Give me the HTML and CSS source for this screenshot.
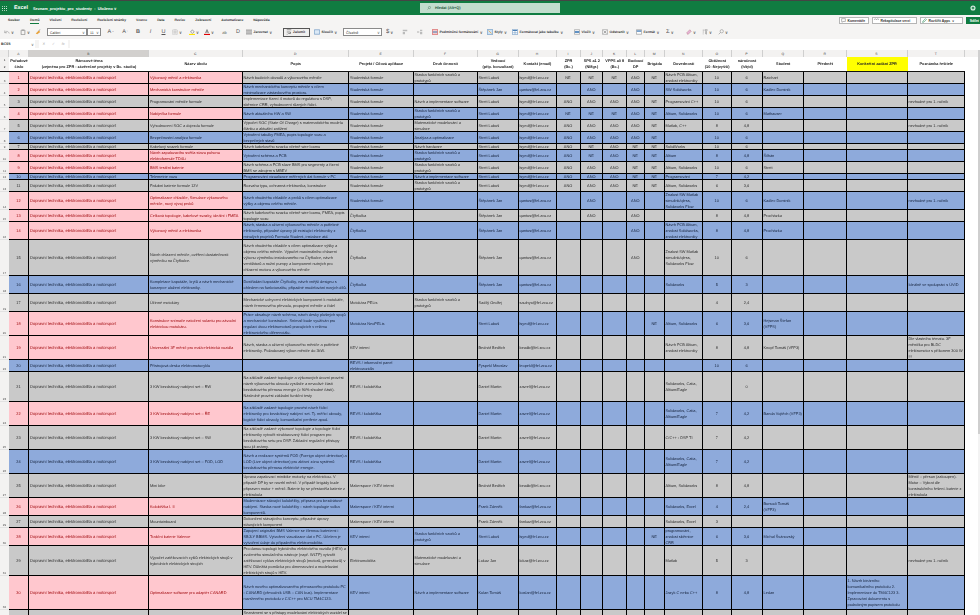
FILE: index.html
```html
<!DOCTYPE html>
<html lang="cs">
<head>
<meta charset="utf-8">
<title>Seznam_projektu_pro_studenty</title>
<link rel="stylesheet" href="styles.css">
</head>
<body>
<div class="app">
<header class="titlebar">
  <svg class="waffle" viewBox="0 0 6 6"><path d="M0 0h1v1H0zM2.500 0h1v1h-1zM5 0h1v1H5zM0 2.500h1v1H0zM2.500 2.500h1v1h-1zM5 2.500h1v1H5zM0 5h1v1H0zM2.500 5h1v1h-1zM5 5h1v1H5z" fill="#fff"/></svg>
  <span class="brand">Excel</span>
  <span class="doc">Seznam_projektu_pro_studenty &nbsp;-&nbsp; Uloženo ∨</span>
  <div class="search"><svg class="sicon" viewBox="0 0 8 8"><circle cx="5" cy="3" r="2.200" fill="none" stroke="#3a6b50" stroke-width="0.800"/><path d="M3.400 4.600 1 7" stroke="#3a6b50" stroke-width="0.800"/></svg><span>Hledat (Alt+Q)</span></div>
  <svg class="gear" viewBox="0 0 8 8"><circle cx="4" cy="4" r="2.600" fill="none" stroke="#d8ebe0" stroke-width="1.600"/><circle cx="4" cy="4" r="0.800" fill="#d8ebe0"/></svg>
</header>
<nav class="tabs">
  <span>Soubor</span><span class="on">Domů</span><span>Vložení</span><span>Rozložení</span><span>Rozložení stránky</span><span>Vzorce</span><span>Data</span><span>Revize</span><span>Zobrazení</span><span>Automatizace</span><span>Nápověda</span>
  <div class="actions">
    <button class="act a1"><svg viewBox="0 0 8 8"><path d="M1 1h6v4.500H3.500L2 7V5.500H1z" fill="none" stroke="#444" stroke-width="0.600"/></svg>Komentáře</button>
    <button class="act a2"><svg viewBox="0 0 8 8"><path d="M0 3 2 1 4 3 6 1 8 3" fill="none" stroke="#444" stroke-width="0.700"/></svg>Rekapitulace verzí</button>
    <button class="act a3"><svg viewBox="0 0 8 8"><path d="M1 7 1.500 5 5.500 1 7 2.500 3 6.500z" fill="none" stroke="#107c41" stroke-width="0.800"/></svg>Rozšířit Apps &nbsp;∨</button>
    <button class="share"><svg viewBox="0 0 8 8"><path d="M1 5v2h6V5M4 5V1M2.500 2.500 4 1l1.500 1.500" fill="none" stroke="#fff" stroke-width="0.800"/></svg>Sdílet</button>
  </div>
</nav>
<div class="toolbar">
  <div class="ti"><svg viewBox="0 0 8 8"><path d="M1 2v3h3M1 5c2-3 5-2 6 1" fill="none" stroke="#999" stroke-width="0.800"/></svg><em>∨</em></div>
  <div class="ti"><svg viewBox="0 0 8 8"><path d="M1.500 1.500h5v6h-5z" fill="none" stroke="#777" stroke-width="0.800"/><path d="M3 1h2v1H3z" fill="#777"/></svg><em>∨</em></div>
  <div class="ti"><svg viewBox="0 0 8 8"><path d="M1 6 5 2l2 2-4 3z" fill="#e8a33d"/><path d="M5 2 7 1" stroke="#666" stroke-width="0.800"/></svg></div>
  <div class="fontsel"><span class="sel fname">Calibri<em>∨</em></span><span class="sel fsize">11<em>∨</em></span></div>
  <div class="ti big">A<sup>^</sup></div>
  <div class="ti big">A<sup>ˇ</sup></div>
  <div class="ti big"><b>B</b></div>
  <div class="ti big"><i>I</i></div>
  <div class="ti big"><u>U</u></div>
  <div class="ti"><svg viewBox="0 0 8 8"><path d="M1 1h6v6H1zM4 1v6M1 4h6" fill="none" stroke="#888" stroke-width="0.600" stroke-dasharray="1 0.600"/></svg><em>∨</em></div>
  <div class="ti"><svg viewBox="0 0 8 8"><path d="M2 4 4.500 1 7 4 4.500 5.800z" fill="none" stroke="#666" stroke-width="0.700"/><path d="M0 6.500h8V8H0z" fill="#ffe500"/></svg><em>∨</em></div>
  <div class="ti"><svg viewBox="0 0 8 8"><path d="M2 5.500 4 .8 6 5.500M2.800 4h2.400" fill="none" stroke="#444" stroke-width="0.800"/><path d="M0 6.500h8V8H0z" fill="#e00000"/></svg><em>∨</em></div>
  <div class="ti small">ab</div>
  <div class="ti big">D</div>
  <div class="ti lab"><svg viewBox="0 0 8 8"><path d="M0 1.500h8M0 4h8M0 6.500h8" stroke="#555" stroke-width="0.900"/></svg><span>Zarovnat</span><em>∨</em></div>
  <div class="ti lab sel2"><svg viewBox="0 0 8 8"><path d="M1 1h6M1 4h5v2H3M1 7h1" fill="none" stroke="#555" stroke-width="0.800"/></svg><span>Zalomit</span></div>
  <div class="ti lab"><svg viewBox="0 0 8 8"><path d="M.5 1h7v6h-7z" fill="#dbe9f6" stroke="#4a7fb5" stroke-width="0.700"/></svg><span>Sloučit</span><em>∨</em></div>
  <span class="sel numfmt">Číselné<em>∨</em></span>
  <div class="ti"><span class="sym">$</span><em>∨</em></div>
  <div class="ti"><svg viewBox="0 0 8 8"><path d="M1 1h6v2H1zM1 4h3v3H1z" fill="#bbb"/></svg></div>
  <div class="ti"><svg viewBox="0 0 8 8"><path d="M4 1h3v2H4zM4 4h3v3H4z" fill="#bbb"/><path d="M0 4h3" stroke="#999"/></svg></div>
  <div class="ti lab"><svg viewBox="0 0 8 8"><path d="M.5.500h7v7h-7z" fill="#f4cccc" stroke="#c33" stroke-width="0.700"/><path d="M1 4h6" stroke="#4a7fb5" stroke-width="1.400"/></svg><span>Podmíněné formátování</span><em>∨</em></div>
  <div class="ti lab"><svg viewBox="0 0 8 8"><path d="M.5.500h7v7h-7z" fill="#cfe2f3" stroke="#4a7fb5" stroke-width="0.700"/><path d="M2 2 6 6" stroke="#e8a33d"/></svg><span>Styly</span><em>∨</em></div>
  <div class="ti lab"><svg viewBox="0 0 8 8"><path d="M.5.500h7v7h-7z" fill="#fff" stroke="#4a7fb5" stroke-width="0.700"/><path d="M1 2h6" stroke="#4a7fb5" stroke-width="1.400"/><path d="M4 1v6M1 5h6" stroke="#4a7fb5" stroke-width="0.600"/></svg><span>Formátovat jako tabulku</span><em>∨</em></div>
  <div class="ti lab"><svg viewBox="0 0 8 8"><path d="M.5 1h7v6h-7z" fill="#fff" stroke="#666" stroke-width="0.600"/><path d="M1 3h6v2H1z" fill="#2b6cb0"/></svg><span>Vložit</span><em>∨</em></div>
  <div class="ti lab"><svg viewBox="0 0 8 8"><path d="M.5 1h7v6h-7z" fill="#fff" stroke="#666" stroke-width="0.600"/><path d="M2 2.500 6 5.500M6 2.500 2 5.500" stroke="#555" stroke-width="0.700"/></svg><span>Odstranit</span><em>∨</em></div>
  <div class="ti lab"><svg viewBox="0 0 8 8"><path d="M.5 1h7v6h-7z" fill="#fff" stroke="#666" stroke-width="0.600"/><path d="M1 2h6v1.500H1z" fill="#2b6cb0"/></svg><span>Formát</span><em>∨</em></div>
  <div class="ti"><span class="sym">Σ</span><em>∨</em></div>
  <div class="ti"><svg viewBox="0 0 8 8"><path d="M1 5 5 1l2 2-4 4H2z" fill="#e6b3d8" stroke="#a66" stroke-width="0.500"/></svg><em>∨</em></div>
  <div class="ti"><svg viewBox="0 0 8 8"><path d="M1 1.500h2M1 4h1.500M1 6.500h1M4 1h3L5.800 3.500V7L5 6.500V3.500z" fill="none" stroke="#777" stroke-width="0.700"/></svg><em>∨</em></div>
  <div class="ti"><svg viewBox="0 0 8 8"><circle cx="5" cy="3" r="2.200" fill="none" stroke="#888" stroke-width="0.700"/><path d="M3.400 4.600 1 7" stroke="#888" stroke-width="0.800"/></svg><em>∨</em></div>
</div>
<div class="formula">
  <div class="namebox"><b>BC65</b><em>∨</em></div>
  <div class="fxbtns"><span>✕</span><span>✓</span><span><i>fx</i></span></div>
  <div class="fxinput"></div>
</div>
<main class="workspace">
<div class="sheet">
  <div class="colhead"><div class="corner"></div><div>A</div><div class="picked">B</div><div>C</div><div>D</div><div>E</div><div>F</div><div>G</div><div>H</div><div>I</div><div>J</div><div>K</div><div>L</div><div>M</div><div>N</div><div>O</div><div>P</div><div>Q</div><div>R</div><div>S</div><div>T</div></div>
  <div class="thead"><div class="rh2"><span>1</span><span>2</span></div><div>Pořadové číslo</div><div>Rámcové téma<br>(zejména pro ZPR - závěrečné projekty v Bc. studiu)</div><div>Název úkolu</div><div>Popis</div><div>Projekt / Cílová aplikace</div><div>Druh činnosti</div><div>Vedoucí<br>(příp. konzultant)</div><div>Kontakt (email)</div><div>ZPR<br>(Bc.)</div><div>SPS a1 2<br>(NMgr.)</div><div>VPPS a0 8<br>(Bc.)</div><div>Budoucí<br>DP</div><div>Brigáda</div><div>Dovednosti</div><div>Obtížnost<br>(10 -Nejvyšší)</div><div>náročnost<br>(h/týd)</div><div>Student</div><div>Předmět</div><div class="yellow">Konkrétní zadání ZPR</div><div>Poznámka řešitele</div></div>

  <div class="row h12 g pk"><div>3</div><div>1</div><div>Dopravní technika, elektromobilita a motorsport</div><div>Výkonový měnič a elektronika</div><div>Návrh budicích obvodů a výkonového měniče</div><div>Studentská formule</div><div>Stavba funkčních vzorků a prototypů</div><div>Streit Luboš</div><div>lsyed@fel.zcu.cz</div><div>NE</div><div>NE</div><div>NE</div><div>ANO</div><div>NE</div><div>Návrh PCB Altium, znalost elektroniky</div><div>10</div><div>6</div><div>Raichart</div><div></div><div></div><div></div></div>
  <div class="row h12 b pk"><div>4</div><div>2</div><div>Dopravní technika, elektromobilita a motorsport</div><div>Mechanická konstrukce měniče</div><div>Návrh mechanického konceptu měniče s cílem minimalizace zástavbového prostoru.</div><div>Studentská formule</div><div></div><div>Štěpánek Jan</div><div>qantos@fel.zcu.cz</div><div></div><div>ANO</div><div></div><div>ANO</div><div></div><div>SW Solidworks</div><div>10</div><div>6</div><div>Kadlec Dominik</div><div></div><div></div><div></div></div>
  <div class="row h12 g"><div>5</div><div>3</div><div>Dopravní technika, elektromobilita a motorsport</div><div>Programování měniče formule</div><div>Implementace řízení 4 motorů do regulátoru s DSP, sběrnice CRR, vyhodnocení různých řídicí.</div><div>Studentská formule</div><div>Návrh a implementace software</div><div>Streit Luboš</div><div>lsyed@fel.zcu.cz</div><div>ANO</div><div>ANO</div><div>ANO</div><div>ANO</div><div>NE</div><div>Programování C++</div><div>10</div><div>6</div><div></div><div></div><div></div><div>nevhodné pro 1. ročník</div></div>
  <div class="row h12 b pk"><div>6</div><div>4</div><div>Dopravní technika, elektromobilita a motorsport</div><div>Nabíječka formule</div><div>Návrh aktuálního HW a SW</div><div>Studentská formule</div><div>Stavba funkčních vzorků a prototypů</div><div>Streit Luboš</div><div>lsyed@fel.zcu.cz</div><div>NE</div><div>NE</div><div>NE</div><div>ANO</div><div>NE</div><div>Altium, Solidworks</div><div>10</div><div>6</div><div>Mathauser</div><div></div><div></div><div></div></div>
  <div class="row h12 g"><div>7</div><div>5</div><div>Dopravní technika, elektromobilita a motorsport</div><div>Vyhodnocení SOC a dojezdu formule</div><div>Výpočet SOC (State Of Charge) s matematického modelu článku a aktuální zatížení</div><div>Studentská formule</div><div>Matematické modelování a simulace</div><div>Streit Luboš</div><div>lsyed@fel.zcu.cz</div><div>ANO</div><div>ANO</div><div>ANO</div><div>ANO</div><div>NE</div><div>Matlab, C++</div><div>8</div><div>4,8</div><div></div><div></div><div></div><div>nevhodné pro 1. ročník</div></div>
  <div class="row h12 b"><div>8</div><div>6</div><div>Dopravní technika, elektromobilita a motorsport</div><div>Bezpečnostní analýza formule</div><div>Vytvoření tabulky FMEA, popis topologie vozu a bezpečných stavů</div><div>Studentská formule</div><div>Analýza a optimalizace</div><div>Streit Luboš</div><div>lsyed@fel.zcu.cz</div><div>ANO</div><div>ANO</div><div>ANO</div><div>ANO</div><div>NE</div><div></div><div>10</div><div>6</div><div></div><div></div><div></div><div></div></div>
  <div class="row h6 g"><div>9</div><div>7</div><div>Dopravní technika, elektromobilita a motorsport</div><div>Kabelový svazek formule</div><div>Návrh kabelového svazku včetně wire loomu</div><div>Studentská formule</div><div>Návrh hardware</div><div>Streit Luboš</div><div>lsyed@fel.zcu.cz</div><div>ANO</div><div>NE</div><div>ANO</div><div>NE</div><div>NE</div><div>SolidWorks</div><div>10</div><div>6</div><div></div><div></div><div></div><div></div></div>
  <div class="row h12 b pk"><div>10</div><div>8</div><div>Dopravní technika, elektromobilita a motorsport</div><div>Návrh zapalovacího světla stavu pohonu elektroformule TD4Li</div><div>Vytvoření schéma a PCB</div><div>Studentská formule</div><div>Stavba funkčních vzorků a prototypů</div><div>Streit Luboš</div><div>lsyed@fel.zcu.cz</div><div>ANO</div><div>NE</div><div>ANO</div><div>NE</div><div>NE</div><div>Altium</div><div>8</div><div>4,8</div><div>Šilhán</div><div></div><div></div><div></div></div>
  <div class="row h12 g pk"><div>11</div><div>9</div><div>Dopravní technika, elektromobilita a motorsport</div><div>BMS testční baterie</div><div>Návrh schéma a PCB slave BMS pro segmenty a řízení BMS se zdrojem s MBEV</div><div>Studentská formule</div><div>Stavba funkčních vzorků a prototypů</div><div>Streit Luboš</div><div>lsyed@fel.zcu.cz</div><div>ANO</div><div>ANO</div><div>ANO</div><div>NE</div><div>NE</div><div>Altium, Solidworks</div><div>10</div><div>6</div><div>Streit</div><div></div><div></div><div></div></div>
  <div class="row h6 b"><div>12</div><div>10</div><div>Dopravní technika, elektromobilita a motorsport</div><div>Telemetrie vozu</div><div>Programování vizualizace měřených dat formule v PC</div><div>Studentská formule</div><div>Návrh a implementace software</div><div>Streit Luboš</div><div>lsyed@fel.zcu.cz</div><div>ANO</div><div>ANO</div><div>ANO</div><div>NE</div><div>NE</div><div>Programování</div><div>7</div><div>4,2</div><div></div><div></div><div></div><div></div></div>
  <div class="row h12 g"><div>13</div><div>11</div><div>Dopravní technika, elektromobilita a motorsport</div><div>Palubní baterie formule 12V</div><div>Rozvaha typu, ochranná elektronika, konstrukce</div><div>Studentská formule</div><div>Stavba funkčních vzorků a prototypů</div><div>Streit Luboš</div><div>lsyed@fel.zcu.cz</div><div>ANO</div><div>ANO</div><div>ANO</div><div>NE</div><div>NE</div><div>Altium, Solidworks</div><div>6</div><div>3,6</div><div></div><div></div><div></div><div></div></div>
  <div class="row h18 b pk"><div>14</div><div>12</div><div>Dopravní technika, elektromobilita a motorsport</div><div>Optimalizace chladiče, Simulace výkonového měniče, nový vývoj prvků</div><div>Návrh vhodného chladiče a prvků s cílem optimalizace výšky a objemu celého měniče.</div><div>Studentská formule</div><div></div><div>Štěpánek Jan</div><div>qantos@fel.zcu.cz</div><div></div><div>ANO</div><div></div><div>ANO</div><div></div><div>Znalost SW Matlab simulink/qless, Solidworks Flow</div><div>10</div><div>6</div><div>Kadlec Dominik</div><div></div><div></div><div>nevhodné pro 1. ročník</div></div>
  <div class="row h12 g pk"><div>15</div><div>13</div><div>Dopravní technika, elektromobilita a motorsport</div><div>Celková topologie, kabelové svazky, ideální i FMEA</div><div>Návrh kabelového svazku včetně wire loomu, FMEA, popis topologie vozu</div><div>Čtyřkolka</div><div></div><div>Štěpánek Jan</div><div>qantos@fel.zcu.cz</div><div></div><div>ANO</div><div></div><div>ANO</div><div></div><div></div><div>8</div><div>4,8</div><div>Procházka</div><div></div><div></div><div></div></div>
  <div class="row h18 b pk"><div>16</div><div>14</div><div>Dopravní technika, elektromobilita a motorsport</div><div>Výkonový měnič a elektronika</div><div>Návrh, stavba a oživení výkonového měniče a potřebné elektroniky, případné úpravy již existující elektroniky z minulých projektů Formula Student, instalace atd.</div><div>Čtyřkolka</div><div></div><div>Štěpánek Jan</div><div>qantos@fel.zcu.cz</div><div></div><div></div><div></div><div>ANO</div><div></div><div>Návrh PCB Altium, znalost Solidworks, znalost elektroniky</div><div>8</div><div>4,8</div><div>Procházka</div><div></div><div></div><div></div></div>
  <div class="row h36 g"><div>17</div><div>15</div><div>Dopravní technika, elektromobilita a motorsport</div><div>Návrh chlazení měniče, ověření dostatečnosti výměníku na Čtyřkolce.</div><div>Návrh vhodného chladiče s cílem optimalizace výšky a objemu celého měniče. Výpočet maximálního chlazení výkonu výměníku instalovaného na Čtyřkolce, návrh ventilátorů a nožní pumpy a komponent nutných pro chlazení motoru a výkonového měniče</div><div>Čtyřkolka</div><div></div><div>Štěpánek Jan</div><div>qantos@fel.zcu.cz</div><div></div><div></div><div></div><div>ANO</div><div></div><div>Znalost SW Matlab simulink/qless, Solidworks Flow</div><div>10</div><div>6</div><div></div><div></div><div></div><div></div></div>
  <div class="row h18 b"><div>18</div><div>16</div><div>Dopravní technika, elektromobilita a motorsport</div><div>Kompletace kapotáže, krytů a návrh mechanické konzepce uložení elektroniky.</div><div>Dostřádání kapotáže Čtyřkolky, návrh vnější designu s ohledem na funkcionalitu, případné modelování nových dílů.</div><div>Čtyřkolka</div><div></div><div>Štěpánek Jan</div><div>qantos@fel.zcu.cz</div><div></div><div></div><div></div><div></div><div></div><div>Solidworks</div><div>5</div><div>3</div><div></div><div></div><div></div><div>Ideálně ve spolupráci s ÚVID</div></div>
  <div class="row h18 g"><div>19</div><div>17</div><div>Dopravní technika, elektromobilita a motorsport</div><div>Účinné motokáry</div><div>Mechanické uchycení elektrických komponent k motokáře, návrh řemenového převodu, propojení měniče a čidel</div><div>Motokára PELis</div><div>Stavba funkčních vzorků a prototypů</div><div>Sadílý Ondřej</div><div>saulnyo@fel.zcu.cz</div><div></div><div></div><div></div><div></div><div></div><div></div><div>4</div><div>2,4</div><div></div><div></div><div></div><div></div></div>
  <div class="row h24 b pk"><div>20</div><div>18</div><div>Dopravní technika, elektromobilita a motorsport</div><div>Konstrukce snímače natočení volantu pro závodní elektrickou motokáru.</div><div>Práce obsahuje návrh schéma, návrh desky plošných spojů a mechanické konstrukce. Snímač bude využíván pro regulaci dvou elektromotorů pracujících v režimu elektronického diferenciálu.</div><div>Motokára NeoPELis</div><div></div><div>Streit Luboš</div><div>lsyed@fel.zcu.cz</div><div></div><div></div><div></div><div></div><div>NE</div><div>Altium, Solidworks</div><div>6</div><div>3,6</div><div>Hejsman Štefan (VFPS)</div><div></div><div></div><div></div></div>
  <div class="row h24 g pk"><div>21</div><div>19</div><div>Dopravní technika, elektromobilita a motorsport</div><div>Univerzální 3F měnič pro malá elektrická vozidla</div><div>Návrh, stavba a oživení výkonového měniče a potřebné elektroniky. Požadovaný výkon měniče do 3kW.</div><div>KEV interní</div><div></div><div>Bednář Bedřich</div><div>beadb@fel.zcu.cz</div><div></div><div></div><div></div><div></div><div></div><div>Návrh PCB Altium, znalost elektroniky</div><div>8</div><div>4,8</div><div>Knopf Tomáš (VFP3)</div><div></div><div></div><div>Dle vlastního tématu. 3F měnička pro BLDC elektromotor s příkonem 300 W !!!</div></div>
  <div class="row h12 b"><div>22</div><div>20</div><div>Dopravní technika, elektromobilita a motorsport</div><div>Přístrojová deska elektromotocyklu</div><div></div><div>REVS / informační panel elektrovozidla</div><div></div><div>Fyspekl Miroslav</div><div>leopekl@fel.zcu.cz</div><div></div><div></div><div></div><div></div><div></div><div></div><div>10</div><div>6</div><div></div><div></div><div></div><div></div></div>
  <div class="row h30 g"><div>23</div><div>21</div><div>Dopravní technika, elektromobilita a motorsport</div><div>3 KW bezdrátový nabíjecí set – RW</div><div>Na základě zadané topologie a výkonových úrovní provést návrh výkonového obvodu vysílače a nevodivé části bezdrátového přenosu energie (≥ 90% shodné části). Následně provést základní funkční testy</div><div>REVS / koloběžka</div><div></div><div>Daniel Martin</div><div>zavrel@fel.zcu.cz</div><div></div><div></div><div></div><div></div><div></div><div>Solidworks, Catia, Altium/Eagle</div><div></div><div>0</div><div></div><div></div><div></div><div></div></div>
  <div class="row h24 b pk"><div>24</div><div>22</div><div>Dopravní technika, elektromobilita a motorsport</div><div>3 KW bezdrátový nabíjecí set – ŘE</div><div>Na základě zadané topologie provést návrh řídicí elektroniky pro bezdrátový nabíjecí set. Tj. měřicí obvody, logické řídicí obvody, komunikační periferie apod.</div><div>REVS / koloběžka</div><div></div><div>Daniel Martin</div><div>zavrel@fel.zcu.cz</div><div></div><div></div><div></div><div></div><div></div><div>Solidworks, Catia, Altium/Eagle</div><div>7</div><div>4,2</div><div>Banda Vojtěch (VFP3)</div><div></div><div></div><div></div></div>
  <div class="row h24 g"><div>25</div><div>23</div><div>Dopravní technika, elektromobilita a motorsport</div><div>3 KW bezdrátový nabíjecí set – SW</div><div>Na základě zadané výkonové topologie a topologie řídicí elektroniky vytvořit strukturovaný řídicí program pro bezdrátového setu pro DSP. Základní regulační přístupy jsou již známy.</div><div>REVS / koloběžka</div><div></div><div>Daniel Martin</div><div>zavrel@fel.zcu.cz</div><div></div><div></div><div></div><div></div><div></div><div>C/C++ - DSP TI</div><div>7</div><div>4,2</div><div></div><div></div><div></div><div></div></div>
  <div class="row h24 b"><div>26</div><div>24</div><div>Dopravní technika, elektromobilita a motorsport</div><div>3 KW bezdrátový nabíjecí set – FOD, LOD</div><div>Návrh a realizace systémů FOD (Foreign object detection) a LOD (Live object detection) pro aktivní zónu systémů bezdrátového přenosu elektrické energie.</div><div>REVS / koloběžka</div><div></div><div>Daniel Martin</div><div>zavrel@fel.zcu.cz</div><div></div><div></div><div></div><div></div><div></div><div>Solidworks, Catia, Altium/Eagle</div><div>7</div><div>4,2</div><div></div><div></div><div></div><div></div></div>
  <div class="row h24 g"><div>27</div><div>25</div><div>Dopravní technika, elektromobilita a motorsport</div><div>Mini bike</div><div>Úprava zapalovací minibike motorky na elektrickou. V případě DP by se navrhl měnič. V případě brigády bude připraven motor + měnič. Baterie by se přestavěla baterie z elektrokola</div><div>Makerspace / KEV interní</div><div></div><div>Bednář Bedřich</div><div>beadb@fel.zcu.cz</div><div></div><div></div><div></div><div></div><div></div><div>Altium, Solidworks</div><div>8</div><div>4,8</div><div></div><div></div><div></div><div>Měnič – přesun (zakoupen). Motor – Vybrat dle konstrukčního řešení. baterie z elektrokola</div></div>
  <div class="row h18 b pk"><div>28</div><div>26</div><div>Dopravní technika, elektromobilita a motorsport</div><div>Koloběžka I. II</div><div>Modernizace stávající koloběžky, příprava pro bezdrátové nabíjení. Stavba nové koloběžky - návrh topologie volba komponentů.</div><div>Makerspace / KEV interní</div><div></div><div>Frank Zdeněk</div><div>fankaz@fel.zcu.cz</div><div></div><div></div><div></div><div></div><div></div><div>Solidworks, Excel</div><div>4</div><div>2,4</div><div>Borsodi Tomáš (VFP3)</div><div></div><div></div><div></div></div>
  <div class="row h12 g"><div>29</div><div>27</div><div>Dopravní technika, elektromobilita a motorsport</div><div>Mountainboard</div><div>Dokončení stávajícího konceptu, případné úpravy stávajících komponent</div><div>Makerspace / KEV interní</div><div></div><div>Frank Zdeněk</div><div>fankaz@fel.zcu.cz</div><div></div><div></div><div></div><div></div><div></div><div>Solidworks, Excel</div><div>3</div><div></div><div></div><div></div><div></div><div></div></div>
  <div class="row h18 b pk"><div>30</div><div>28</div><div>Dopravní technika, elektromobilita a motorsport</div><div>Trakční baterie Valence</div><div>Zapojení originální BMS Valence se člennou bateriemi i SBJLY BBMS. Vytvoření vizualizace dat v PC. Účelem je vytvoření údaje do případného elektromobilita.</div><div>KEV interní</div><div>Stavba funkčních vzorků a prototypů</div><div>Streit Luboš</div><div>lsyed@fel.zcu.cz</div><div></div><div></div><div></div><div></div><div>NE</div><div>programování, znalost sběrnice CRR</div><div>6</div><div>3,6</div><div>Michal Švánovský</div><div></div><div></div><div></div></div>
  <div class="row h30 g"><div>31</div><div>29</div><div>Dopravní technika, elektromobilita a motorsport</div><div>Výpočet zatěžovacích cyklů elektrických strojů v hybridních elektrických strojích</div><div>Pro danou topologii hybridního elektrického vozidla (HEV) a zvoleného simulačního nástroje (např. WLTP) vytvořit zatěžovací cyklus elektrických strojů (motorů, generátorů) v HEV. Důležitá pomůcka pro dimenzování a modelování elektrických strojů v HEV.</div><div>Elektromobilita</div><div>Matematické modelování a simulace</div><div>Lokaz Jan</div><div>lokaz@fel.zcu.cz</div><div></div><div></div><div></div><div></div><div></div><div>Matlab</div><div>5</div><div>3</div><div></div><div></div><div></div><div>nevhodné pro 1. ročník</div></div>
  <div class="row h34 b pk"><div>32</div><div>30</div><div>Dopravní technika, elektromobilita a motorsport</div><div>Optimalizace software pro adaptér CANARD</div><div>Návrh nového optimalizovaného přenosového protokolu PC - CANARD (převodník USB – CAN bus). Implementace navrženého protokolu v C/C++ pro MCU TM4C123.</div><div>KEV interní</div><div>Návrh a implementace software</div><div>Kolan Tomáš</div><div>koslan@fel.zcu.cz</div><div></div><div></div><div></div><div></div><div></div><div>Jazyk C nebo C++</div><div>8</div><div>4,8</div><div>Ledan</div><div></div><div>1. Návrh binárního komunikačního protokolu 2. Implementace do TM4C123 3. Zpracování dokumentu s podrobným popisem protokolu</div><div></div></div>
  <div class="row h36 g top"><div></div><div></div><div></div><div></div><div><span class="lastline">Seznámení se s přístupy modelování elektrických vozidel se</span></div><div></div><div></div><div></div><div></div><div></div><div></div><div></div><div></div><div></div><div></div><div></div><div></div><div></div><div></div><div></div><div></div></div>
</div>
<div class="vscroll"><div class="thumb"></div></div>
</main>
</div>
</body>
</html>
```
FILE: styles.css
```css
* { box-sizing: border-box; }
html, body { margin: 0; height: 100%; overflow: hidden; background: #fff; }
body { font-family: "Liberation Sans", Arial, sans-serif; color: #333; text-rendering: geometricPrecision; }
svg { display: block; }
em { font-style: normal; font-size: 4px; color: #666; }
.app { width: 980px; height: 615px; display: flex; flex-direction: column; overflow: hidden; filter: blur(0.2px); }

.titlebar { height: 15px; flex: none; background: #107c41; border-top: 1px solid #444; display: flex; align-items: center; padding-left: 2px; color: #fff; position: relative; }
.waffle { width: 5px; height: 5px; margin-right: 7px; }
.brand { font-size: 5.4px; font-weight: 700; width: 19px; }
.doc { font-size: 3.9px; font-weight: 700; }
.search { position: absolute; left: 420px; top: 2px; width: 140px; height: 10px; background: #c2ddcd; display: flex; align-items: center; padding-left: 7px; gap: 4px; color: #24563c; font-size: 3.8px; font-weight: 700; }
.sicon { width: 4px; height: 4px; }
.gear { width: 6px; height: 6px; margin-left: auto; margin-right: 4px; }

.tabs { height: 10px; flex: none; background: #f5f4f3; display: flex; align-items: center; gap: 10px; padding-left: 8px; font-size: 3.4px; color: #333; font-weight: 700; }
.tabs > span { position: relative; }
.tabs .on::after { content: ""; position: absolute; left: 0; right: 0; bottom: -2px; height: 1px; background: #107c41; }
.actions { margin-left: auto; display: flex; gap: 3px; padding-top: 2px; align-self: flex-start; }
.act, .share { height: 7px; padding: 0 0 0 1px; margin: 0; display: flex; align-items: center; gap: 1.5px; font: 700 3.4px "Liberation Sans", sans-serif; color: #333; background: #fff; border: 1px solid #b5b5b5; white-space: nowrap; overflow: hidden; }
.act svg, .share svg { width: 5px; height: 5px; }
.a1 { width: 30px; }
.a2 { width: 45px; }
.a3 { width: 43px; }
.share { width: 14px; background: #107c41; border-color: #107c41; color: #fff; }

.toolbar { height: 14px; flex: none; background: #f5f4f3; display: grid; grid-template-columns: 12px 11px 8px 54px 11px 10px 8px 9px 9px 13px 11px 11px 11px 8px 33px 27px 25px 39px 12px 11px 11px 51px 21px 58px 24px 30px 26px 16px 12px 12px 13px; column-gap: 4px; align-items: center; padding-left: 4px; font-size: 3.4px; font-weight: 700; color: #333; }
.ti { display: flex; align-items: center; gap: 1px; height: 9px; white-space: nowrap; overflow: hidden; }
.ti svg { width: 6px; height: 6px; flex: none; }
.ti sup { font-size: 3px; line-height: 0; }
.big { font-size: 5.5px; font-weight: 400; color: #555; justify-content: center; }
.small { font-size: 4px; font-weight: 400; color: #555; justify-content: center; }
.sym { font-size: 6px; font-weight: 400; color: #555; }
.lab { gap: 1.5px; }
.sel2 { border: 1px solid #555; background: #f0efee; padding-left: 1.5px; }
.fontsel { display: flex; }
.sel { background: #fff; border: 0.6px solid #8a8a8a; height: 8px; display: flex; align-items: center; justify-content: space-between; padding: 1px 1px 0 2px; font-size: 3.6px; font-weight: 400; }
.fname { width: 40px; }
.fsize { width: 14px; }
.numfmt { width: 39px; }

.formula { height: 8px; flex: none; margin-top: 1px; background: #f5f4f3; display: flex; gap: 2px; font-size: 3.7px; }
.namebox { width: 35px; background: #fff; display: flex; align-items: center; justify-content: space-between; padding: 0 1px; }
.fxbtns { width: 29px; margin-left: 2px; background: #fff; display: flex; align-items: center; justify-content: space-around; color: #aaa; }
.fxinput { flex: 1; background: #fff; }

.workspace { flex: 1; min-height: 0; margin-top: 2px; display: flex; overflow: hidden; }
.sheet { width: 978px; flex: none; overflow: hidden; }
.vscroll { width: 2px; flex: none; background: #f3f3f3; }
.thumb { height: 384px; background: #cfcfcf; }

.colhead, .thead, .row { display: grid; grid-template-columns: 9px 20px 120px 93.5px 106.5px 64.5px 64px 41px 38px 24px 22.5px 23.5px 18.5px 19.5px 38.5px 28.5px 31px 41.5px 42.5px 61px 57.5px; width: 965px; }
.colhead { height: 7px; background: #f3f2f1; width: 978px; font-size: 3.4px; color: #444; }
.colhead > div { display: flex; align-items: center; justify-content: center; border-right: 0.5px solid #cfcfcf; }
.colhead .picked { background: #d2d0ce; }
.corner { background: #efeeed; }
.thead { height: 15px; font-size: 3.85px; font-weight: 700; color: #222; border-bottom: 1.5px solid #111; }
.thead > div { display: flex; align-items: center; justify-content: center; text-align: center; line-height: 6px; overflow: hidden; }
.thead .yellow { background: #ffff00; }
.thead .rh2 { flex-direction: column; background: #f3f2f1; font-size: 3px; font-weight: 400; line-height: 7px; border-bottom: 0; }
.h6 { height: 6px; }
.h12 { height: 12px; }
.h18 { height: 18px; }
.h24 { height: 24px; }
.h30 { height: 30px; }
.h34 { height: 34px; }
.h36 { height: 36px; }

.row { font-size: 3.88px; line-height: 6px; color: #2c2c2c; }
.row > div { display: flex; align-items: center; padding: 0 1px; overflow: hidden; border-right: 1px solid #000; border-bottom: 1px solid #000; min-width: 0; }
.row > :nth-child(3) { font-size: 4.12px; }
.g > div { background: #c9c9c9; }
.b > div { background: #8eaadb; color: #16233c; }
.pk > :nth-child(n+2):nth-child(-n+4) { background: #ffc7ce; color: #9c0006; }
.row > :nth-child(2), .row > :nth-child(n+10):nth-child(-n+14), .row > :nth-child(16), .row > :nth-child(17) { justify-content: center; text-align: center; }
.row > :first-child { background: #f3f2f1; color: #555; font-size: 3px; line-height: 4px; align-items: flex-end; justify-content: center; border-right: 0; border-bottom: 0.5px solid #e2e2e2; }
.top > :nth-child(5) { align-items: flex-start; }
.lastline { white-space: nowrap; }
```
